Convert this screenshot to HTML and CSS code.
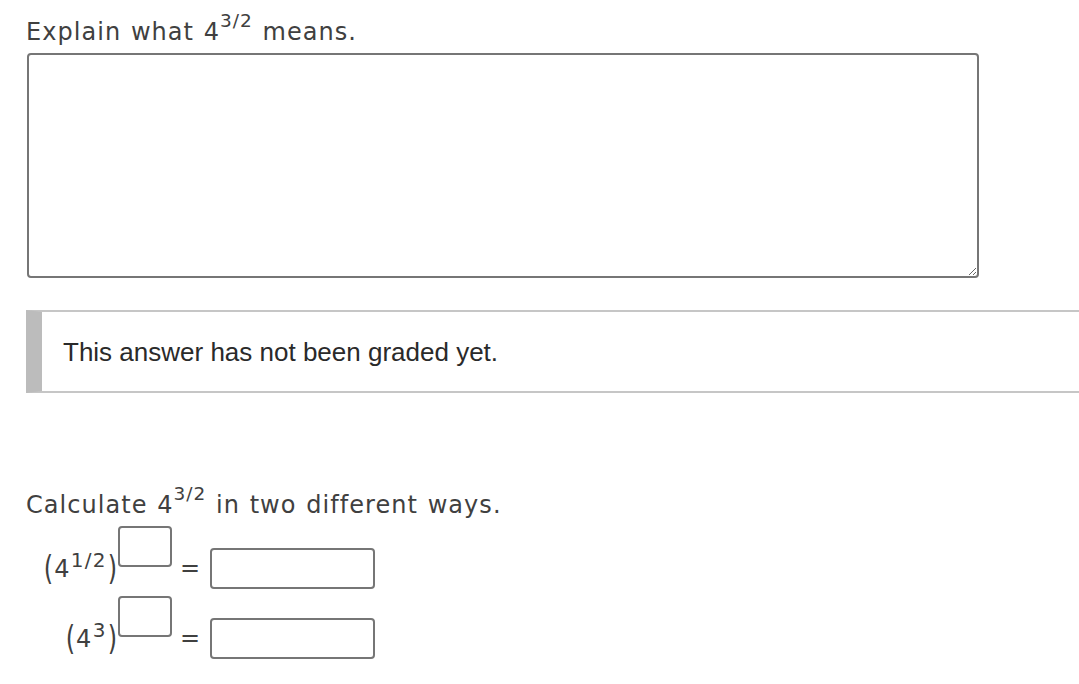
FILE: index.html
```html
<!DOCTYPE html>
<html>
<head>
<meta charset="utf-8">
<link rel="stylesheet" href="styles.css">
</head>
<body>
<div class="page">
  <p class="q q1">Explain what 4<sup>3/2</sup> means.</p>
  <textarea class="essay"></textarea>
  <div class="grade">This answer has not been graded yet.</div>
  <p class="q q2">Calculate 4<sup>3/2</sup> in two different ways.</p>
  <div class="rows">
    <div class="row">
      <span class="base"><span class="paren">(</span>4<sup>1/2</sup><span class="paren">)</span></span>
      <input class="exp" type="text">
      <span class="eq">=</span>
      <input class="ans" type="text">
    </div>
    <div class="row">
      <span class="base"><span class="paren">(</span>4<sup>3</sup><span class="paren">)</span></span>
      <input class="exp" type="text">
      <span class="eq">=</span>
      <input class="ans" type="text">
    </div>
  </div>
</div>
</body>
</html>
```
FILE: styles.css
```css
html, body {
  margin: 0;
  padding: 0;
  background: #ffffff;
}
.page {
  padding-left: 26px;
  font-family: "DejaVu Sans", Verdana, sans-serif;
  font-size: 24px;
  color: #404040;
}
.q {
  margin: 0;
  line-height: 30px;
  letter-spacing: 1.05px;
  word-spacing: 1px;
}
.q sup {
  font-size: 18.5px;
  line-height: 0;
  vertical-align: 13px;
  letter-spacing: 1px;
}
.q1 {
  padding-top: 17px;
}
.essay {
  display: block;
  box-sizing: border-box;
  margin: 6px 0 0 1px;
  width: 952px;
  height: 225px;
  border: 2px solid #767676;
  border-radius: 4px;
  background: #fff;
  padding: 4px;
}
.grade {
  margin-top: 32px;
  box-sizing: border-box;
  height: 83px;
  border-left: 16px solid #bcbcbc;
  border-top: 2px solid #c6c6c6;
  border-bottom: 2px solid #c6c6c6;
  padding-left: 21px;
  display: flex;
  align-items: center;
  font-family: "Liberation Sans", Arial, Helvetica, sans-serif;
  font-size: 26px;
  color: #2a2a2a;
  padding-top: 2px;
}
.q2 {
  margin-top: 97px;
}
.rows {
  margin-top: 6px;
  display: flex;
  flex-direction: column;
  gap: 7px;
}
.row {
  display: flex;
  align-items: flex-start;
  height: 63px;
}
.base {
  width: 92px;
  text-align: right;
  line-height: 30px;
  margin-top: 28px;
  white-space: nowrap;
  letter-spacing: 1.4px;
}
.base sup {
  font-size: 20px;
  line-height: 0;
  vertical-align: 10px;
  letter-spacing: 1.2px;
}
.paren {
  display: inline-block;
  transform: scaleY(1.38);
  letter-spacing: 0;
  margin: 0 1px;
}
.row input {
  box-sizing: border-box;
  border: 2px solid #767676;
  border-radius: 4px;
  background: #fff;
  margin: 0;
  padding: 0;
  font-size: 20px;
}
.exp {
  width: 54px;
  height: 41px;
}
.eq {
  width: 20px;
  margin-left: 8px;
  line-height: 30px;
  margin-top: 27px;
}
.ans {
  width: 165px;
  height: 41px;
  margin-top: 22px !important;
  margin-left: 10px !important;
}
```
